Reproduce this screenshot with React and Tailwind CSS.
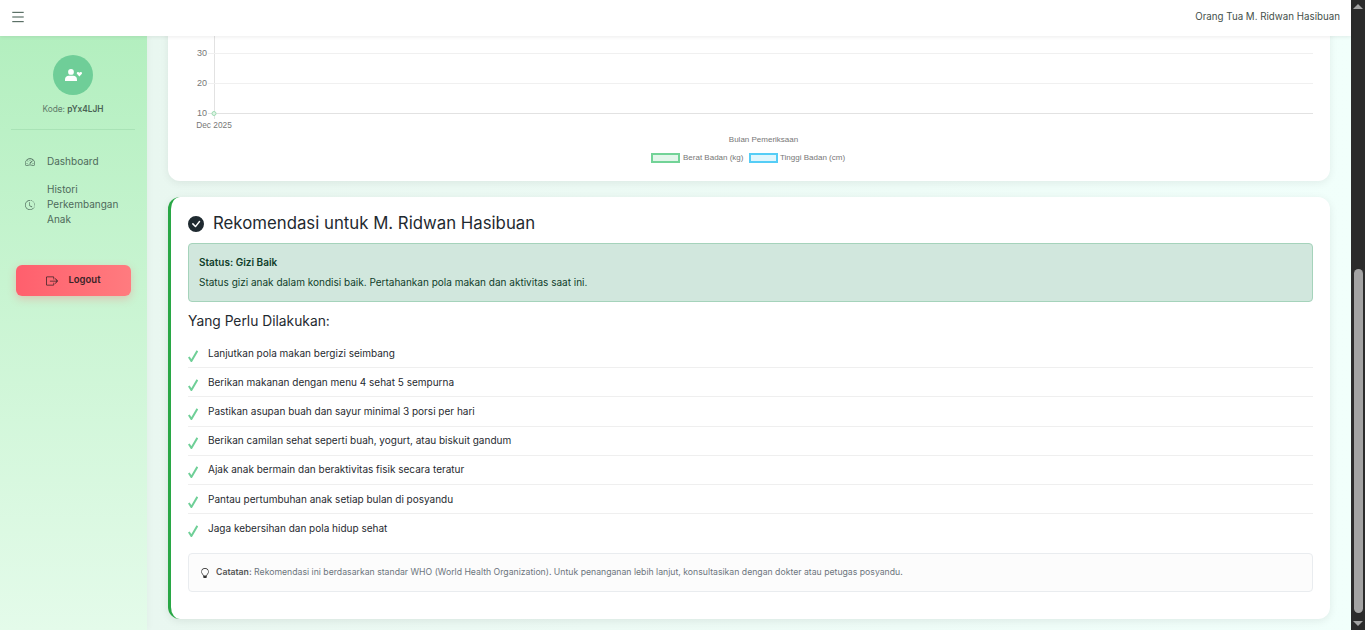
import { Menu } from "lucide-react";
import { BsSpeedometer2, BsClockHistory, BsBoxArrowRight, BsCheckCircleFill, BsLightbulb } from "react-icons/bs";

const TODO = [
  "Lanjutkan pola makan bergizi seimbang",
  "Berikan makanan dengan menu 4 sehat 5 sempurna",
  "Pastikan asupan buah dan sayur minimal 3 porsi per hari",
  "Berikan camilan sehat seperti buah, yogurt, atau biskuit gandum",
  "Ajak anak bermain dan beraktivitas fisik secara teratur",
  "Pantau pertumbuhan anak setiap bulan di posyandu",
  "Jaga kebersihan dan pola hidup sehat",
];

const Chart = () => (
  <svg width="1162" height="167" viewBox="0 0 1162 167" className="block" fontFamily="'Liberation Sans', Arial, sans-serif">
    <line x1="46.5" y1="0" x2="46.5" y2="105" stroke="#e2e2e2" />
    <line x1="40" y1="39.5" x2="1145" y2="39.5" stroke="#f0f0f0" />
    <line x1="40" y1="69.5" x2="1145" y2="69.5" stroke="#f0f0f0" />
    <line x1="40" y1="99.5" x2="1145" y2="99.5" stroke="#e2e2e2" />
    <text x="39" y="42" fontSize="9" fill="#777" textAnchor="end">30</text>
    <text x="39" y="72" fontSize="9" fill="#777" textAnchor="end">20</text>
    <text x="39" y="102" fontSize="9" fill="#777" textAnchor="end">10</text>
    <circle cx="46" cy="99.5" r="2" fill="#dff5e6" stroke="#9fdcb4" />
    <text x="46" y="114" fontSize="8.3" fill="#777" textAnchor="middle">Dec 2025</text>
    <text x="595.5" y="128" fontSize="8" fill="#777" textAnchor="middle">Bulan Pemeriksaan</text>
    <rect x="484" y="140" width="27" height="8" fill="#e2f6ea" stroke="#72d397" strokeWidth="2" />
    <text x="515" y="146" fontSize="8" fill="#777">Berat Badan (kg)</text>
    <rect x="582" y="140" width="27" height="8" fill="#e0f6fd" stroke="#55cdf6" strokeWidth="2" />
    <text x="612" y="146" fontSize="8" fill="#777">Tinggi Badan (cm)</text>
  </svg>
);

// person with a small heart beside it, as in the avatar
const ParentIcon = () => (
  <svg width="17" height="12" viewBox="0 0 17 12" fill="white">
    <circle cx="6" cy="2.9" r="2.9" />
    <path d="M0 12 L0 10.4 C0 8 1.8 6.8 3.6 6.8 L8.4 6.8 C10.2 6.8 12 8 12 10.4 L12 12 Z" />
    <path d="M14.4 7.6 L12.1 5.1 C11.4 4.2 12 3 13 3 C13.6 3 14.1 3.3 14.4 3.8 C14.7 3.3 15.2 3 15.8 3 C16.8 3 17.4 4.2 16.7 5.1 Z" />
  </svg>
);

export default function App() {
  return (
    <div className="flex h-screen overflow-hidden font-['Inter','Noto_Sans',sans-serif] bg-[#2b2b2b]">
      <div className="flex min-w-0 flex-1 flex-col">
        <header className="z-10 flex h-9 shrink-0 items-center justify-between bg-white pl-[10px] pr-[11px] shadow-[0_1px_4px_rgba(0,0,0,0.08)]">
          <Menu size={16} className="-mt-[2px] text-[#1d3a2c]" strokeWidth={1.3} />
          <span className="-mt-[2px] text-[9.75px] text-[#43504a]">Orang Tua M. Ridwan Hasibuan</span>
        </header>
        <div className="flex min-h-0 flex-1">
          <aside className="z-[1] flex w-[147px] shrink-0 flex-col bg-gradient-to-b from-[#b3efbf] to-[#e4fbea] shadow-[2px_0_6px_rgba(0,0,0,0.03)]">
            <div className="ml-[11px] mr-[12px] flex flex-col items-center border-b border-[#a9e3b6] pb-[14px] pt-[19px]">
              <div className="flex h-10 w-10 items-center justify-center rounded-full bg-[#6fce98]">
                <ParentIcon />
              </div>
              <p className="mt-[8px] text-[8.3px] leading-3 text-[#5f7a6a]">
                Kode: <b className="font-semibold text-[#4a6355]">pYx4LJH</b>
              </p>
            </div>
            <nav className="mt-[16px] flex flex-col pl-[25px] pr-[24px] text-[10px] text-[#4e6a5b]">
              <a className="flex items-center gap-[12px] py-[8px] leading-[15px]">
                <BsSpeedometer2 size={10} className="shrink-0" />
                <span>Dashboard</span>
              </a>
              <a className="flex items-center gap-[12px] py-[5px] leading-[15px]">
                <BsClockHistory size={10} className="shrink-0" />
                <span>Histori Perkembangan Anak</span>
              </a>
            </nav>
            <button className="mx-4 mt-[33px] flex h-[31px] items-center justify-center gap-[10px] rounded-md bg-gradient-to-r from-[#ff5f6d] to-[#ff7b7f] text-[9.5px] font-semibold text-[#3a2327] shadow-[0_3px_8px_rgba(255,95,109,0.3)]">
              <BsBoxArrowRight size={12} />
              Logout
            </button>
          </aside>
          <main className="flex min-w-0 flex-1 flex-col bg-gradient-to-r from-[#e9f7f0] to-[#f1fffb] pl-[21px] pr-[21px]">
            <section className="-mt-[22px] shrink-0 rounded-xl bg-white shadow-[0_2px_8px_rgba(0,0,0,0.07)]">
              <Chart />
            </section>
            <section className="mt-4 h-[422px] shrink-0 rounded-xl border-l-[3px] border-[#28a745] bg-white pl-[17px] pr-[17px] pt-[15px] shadow-[0_2px_8px_rgba(0,0,0,0.08)]">
              <h2 className="flex items-center gap-[9px] text-[16.8px] leading-[23px] text-[#1f2a30]">
                <BsCheckCircleFill size={16} className="text-[#1f2a30]" />
                Rekomendasi untuk M. Ridwan Hasibuan
              </h2>
              <div className="mt-[8px] h-[59px] rounded border border-[#a5d3bb] bg-[#d1e7dd] px-[10px] pt-[11px] text-[10px] leading-[14px] text-[#0f3d2a]">
                <p className="font-semibold">Status: Gizi Baik</p>
                <p className="mt-[6px]">Status gizi anak dalam kondisi baik. Pertahankan pola makan dan aktivitas saat ini.</p>
              </div>
              <h3 className="mt-[10px] text-[13.8px] leading-[18px] text-[#1f2a30]">Yang Perlu Dilakukan:</h3>
              <ul className="mt-[9px]">
                {TODO.map((item) => (
                  <li key={item} className="flex h-[29.2px] items-center gap-[10px] border-b border-[#efefef] text-[10px] text-[#1f2a30] last:border-b-0">
                    <svg width="10" height="12" viewBox="0 0 10 12" className="mt-[5px] shrink-0" fill="none" stroke="#6fcf97" strokeWidth="2">
                      <path d="M0.8 7 L3.4 11 L9.4 0.8" />
                    </svg>
                    <span>{item}</span>
                  </li>
                ))}
              </ul>
              <div className="mt-[10px] flex h-[39px] items-center gap-[6px] rounded border border-[#e9ecef] bg-[#fcfcfc] px-[11px] text-[8.7px] text-[#6c757d]">
                <BsLightbulb size={10} className="text-[#333]" />
                <p>
                  <b className="font-semibold text-[#555]">Catatan:</b> Rekomendasi ini berdasarkan standar WHO (World Health Organization). Untuk penanganan lebih lanjut, konsultasikan dengan dokter atau petugas posyandu.
                </p>
              </div>
            </section>
          </main>
        </div>
      </div>
      <div className="relative flex w-[14px] shrink-0 flex-col items-center justify-between bg-[#2b2b2b] py-[4px]">
        <div className="h-0 w-0 border-x-[5px] border-b-[5px] border-x-transparent border-b-[#a3a3a3]" />
        <div className="absolute bottom-[17px] left-[3px] h-[344px] w-[9px] rounded-full bg-[#a3a3a3]" />
        <div className="h-0 w-0 border-x-[5px] border-t-[5px] border-x-transparent border-t-[#a3a3a3]" />
      </div>
    </div>
  );
}
